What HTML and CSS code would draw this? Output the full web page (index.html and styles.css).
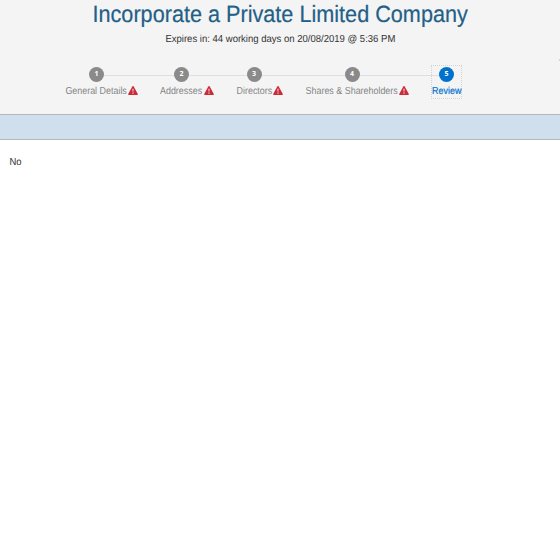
FILE: index.html
```
<!DOCTYPE html>
<html lang="en">
<head>
<meta charset="utf-8">
<title>Incorporate a Private Limited Company</title>
<link rel="stylesheet" href="styles.css">
</head>
<body>
<svg class="defs" width="0" height="0"><symbol id="warn" viewBox="0 0 10 9"><path fill="#cb2a39" d="M4.3.4Q5-.4 5.7.4L9.8 8Q10 9 9.2 9H.8Q0 9 .2 8Z"/><path fill="#f4dada" d="M4.4 2.7h1.2l-.2 3h-.8zM4.4 6.5h1.2v1.2H4.4z"/></symbol></svg>
<header class="head">
<h1 class="title"><span>Incorporate a Private Limited Company</span></h1>
<p class="expires"><span>Expires in: 44 working days on 20/08/2019 @ 5:36 PM</span></p>
<ol class="steps">
<li class="step general"><span class="num">1</span><span class="label">General Details</span><svg class="warn"><use href="#warn"/></svg></li>
<li class="step addresses"><span class="num">2</span><span class="label">Addresses</span><svg class="warn"><use href="#warn"/></svg></li>
<li class="step directors"><span class="num">3</span><span class="label">Directors</span><svg class="warn"><use href="#warn"/></svg></li>
<li class="step shares"><span class="num">4</span><span class="label">Shares &amp; Shareholders</span><svg class="warn"><use href="#warn"/></svg></li>
<li class="step review"><span class="num">5</span><span class="label">Review</span></li>
</ol>
<i class="tick"></i>
</header>
<div class="band"></div>
<main class="content"><span>No</span></main>
</body>
</html>
```
FILE: styles.css
```
* { box-sizing: border-box; }
body { margin: 0; height: 560px; overflow: hidden; background: #fff; color: #333; font-family: "Liberation Sans", Arial, sans-serif; text-rendering: geometricPrecision; }
.defs { position: absolute; }
.head { position: relative; height: 114px; background: #f4f4f4; }
.title { margin: 0; height: 30px; line-height: 29px; text-align: center; font-size: 23.5px; font-weight: 400; color: #235f87; white-space: nowrap; }
.title span { display: inline-block; transform: translateX(.4px) scaleX(.921); -webkit-text-stroke: .2px #235f87; }
.expires { margin: 0; height: 36px; padding-top: 3px; line-height: 14px; text-align: center; font-size: 10.2px; white-space: nowrap; }
.expires span { display: inline-block; transform: translateX(.4px) scaleX(.935); }
.steps { position: relative; display: flex; margin: 0; padding: 0 0 0 66px; list-style: none; font-size: 10.2px; color: #858585; }
.steps::before { content: ""; position: absolute; left: 96px; top: 9px; width: 350px; height: 1px; background: #dcdee1; }
.step { position: relative; display: flex; flex-direction: column; align-items: center; height: 32px; }
.general { width: 61px; margin-right: 33.5px; }
.addresses { width: 42px; margin-right: 33.5px; }
.directors { width: 36px; margin-right: 34px; }
.shares { width: 92px; margin-right: 34px; }
.review { width: 29px; color: #0072ce; outline: 1px dotted #d2d2d2; }
.num { width: 15px; height: 15px; margin-top: 1px; border-radius: 50%; background: #8a8a8a; color: #fff; font: 700 7px/15px "Open Sans", sans-serif; text-align: center; }
.review .num { background: #0072ce; }
.label { margin-top: 4px; line-height: 12px; white-space: nowrap; transform: scaleX(.875); }
.review .label { -webkit-text-stroke: .2px #0072ce; }
.warn { position: absolute; left: calc(100% + 1px); top: 20px; width: 10px; height: 9px; }
.tick { position: absolute; right: 0; top: 59px; width: 1px; height: 2px; background: #d5d5d5; }
.band { height: 26px; border-top: 1px solid #b2b7bb; border-bottom: 1px solid #b2b7bb; background: #d0dfee; }
.content { padding: 17px 9px; font-size: 10.2px; line-height: 12px; }
.content span { display: inline-block; transform: scaleX(.93); }
```
